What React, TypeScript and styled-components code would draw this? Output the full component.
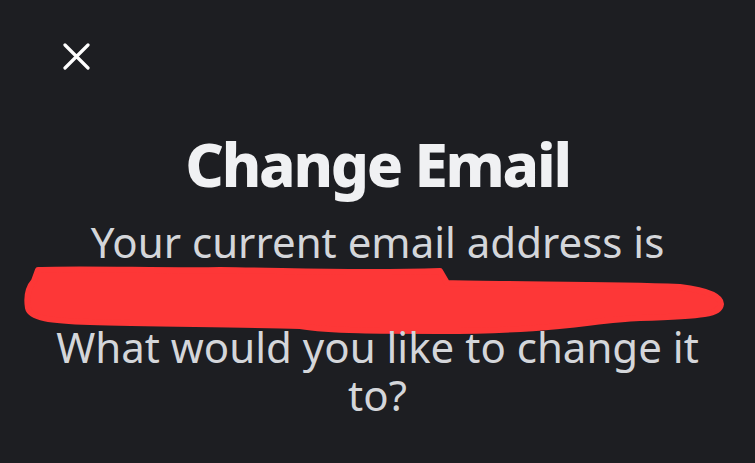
import React from 'react';
import styled, { createGlobalStyle } from 'styled-components';

const GlobalStyle = createGlobalStyle`
  html, body {
    margin: 0;
    padding: 0;
    background: #1d1e22;
  }
`;

const Screen = styled.div`
  width: 755px;
  height: 463px;
  overflow: hidden;
  background: #1d1e22;
  font-family: 'Noto Sans', 'Open Sans', sans-serif;
  display: flex;
  flex-direction: column;
`;

const TopBar = styled.div`
  height: 120px;
  padding: 43px 0 0 63px;
  box-sizing: border-box;
`;

const CloseButton = styled.button`
  width: 27px;
  height: 27px;
  padding: 0;
  border: none;
  background: none;
  display: flex;
  cursor: pointer;
`;

const Content = styled.div`
  display: flex;
  flex-direction: column;
  align-items: center;
  text-align: center;
`;

const Title = styled.h1`
  margin: 0 0 10px;
  font-size: 60px;
  font-weight: 800;
  letter-spacing: -2.2px;
  line-height: 88px;
  color: #f0f1f3;
`;

const Body = styled.p`
  margin: 0;
  font-size: 42px;
  line-height: 48px;
  color: #d4d6da;
  padding: 0 40px;
`;

const Redaction = styled.svg`
  display: block;
  width: 755px;
  height: 57px;
  overflow: visible;
`;

export default function App() {
  return (
    <>
      <GlobalStyle />
      <Screen>
        <TopBar>
          <CloseButton aria-label="Close">
            <svg width="27" height="27" viewBox="0 0 27 27">
              <path d="M2 2 L25 25 M25 2 L2 25" stroke="#ffffff" strokeWidth="3.2" strokeLinecap="round" />
            </svg>
          </CloseButton>
        </TopBar>
        <Content>
          <Title>Change Email</Title>
          <Body>Your current email address is</Body>
          <Redaction viewBox="0 0 755 57">
            <path
              d="M38 4 C80 2 160 5 220 4 C300 5 360 8 440 5 L447 17 C520 19 600 18 680 21 C705 24 721 30 721 38 C720 48 705 50 640 52 C590 54 560 65 440 65 C380 65 330 65 300 60 C240 58 150 58 90 56 C50 55 30 52 28 42 C26 30 28 22 34 15 Z"
              fill="#fd3737"
              stroke="#fd3737"
              strokeWidth="6"
              strokeLinejoin="round"
            />
          </Redaction>
          <Body>What would you like to change it to?</Body>
        </Content>
      </Screen>
    </>
  );
}
